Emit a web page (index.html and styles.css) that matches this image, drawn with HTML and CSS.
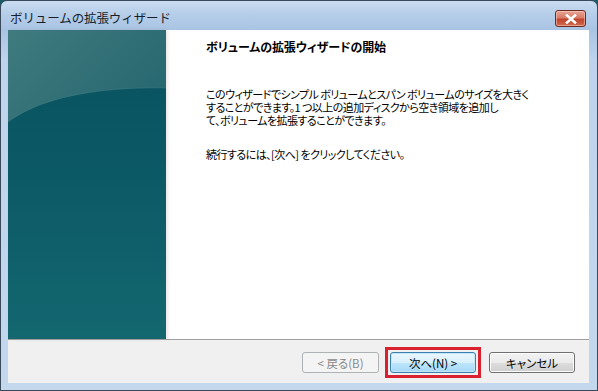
FILE: index.html
```html
<!DOCTYPE html>
<html lang="ja">
<head>
<meta charset="utf-8">
<title>ボリュームの拡張ウィザード</title>
<link rel="stylesheet" href="styles.css">
</head>
<body>
<div class="window">
  <div class="titlebar">
    <span class="title">ボリュームの拡張ウィザード</span>
    <button class="close" aria-label="閉じる">
      <svg width="12" height="10" viewBox="0 0 12 10"><path d="M2 1.5 L10 8.5 M10 1.5 L2 8.5" stroke="#fff" stroke-width="2.6" stroke-linecap="square"/></svg>
    </button>
  </div>
  <div class="client">
    <div class="main">
      <div class="panel">
        <svg width="158" height="309" viewBox="0 0 158 309">
          <defs>
            <linearGradient id="low" x1="0" y1="0" x2="0" y2="1">
              <stop offset="0" stop-color="#09515f"/>
              <stop offset="0.5" stop-color="#0c5a66"/>
              <stop offset="1" stop-color="#13676f"/>
            </linearGradient>
            <linearGradient id="high" x1="0" y1="0" x2="1" y2="0.6">
              <stop offset="0" stop-color="#3f7b7f"/>
              <stop offset="1" stop-color="#286870"/>
            </linearGradient>
          </defs>
          <rect width="158" height="309" fill="url(#low)"/>
          <path d="M0 0 H158 V58 C110 57 40 62 0 92 Z" fill="url(#high)"/>
          <path d="M0 92 C40 62 110 57 158 58" fill="none" stroke="#4b8a8e" stroke-opacity="0.3" stroke-width="1"/>
        </svg>
      </div>
      <div class="content">
        <h1 class="heading">ボリュームの拡張ウィザードの開始</h1>
        <p class="text">このウィザードでシンプル ボリュームとスパン ボリュームのサイズを大きく<br>することができます。1 つ以上の追加ディスクから空き領域を追加し<br>て、ボリュームを拡張することができます。</p>
        <p class="text">続行するには、[次へ] をクリックしてください。</p>
      </div>
    </div>
    <div class="sep"></div>
    <div class="footer">
      <button class="btn disabled">&lt; 戻る(B)</button>
      <span class="highlight"><button class="btn default">次へ(N) &gt;</button></span>
      <button class="btn cancel">キャンセル</button>
    </div>
  </div>
</div>
</body>
</html>
```
FILE: styles.css
```css
html, body {
  margin: 0;
  padding: 0;
  background: #1b5b66;
}
body {
  width: 598px;
  height: 391px;
  overflow: hidden;
  font-family: "Noto Sans CJK JP", "Noto Sans", sans-serif;
}
.window {
  box-sizing: border-box;
  width: 598px;
  height: 391px;
  border: 1px solid #3a4a5a;
  border-radius: 7px 7px 0 0;
  background: linear-gradient(180deg, #c9dcf1 0px, #b5cde8 14px, #a9c4e3 29px, #bfd4ec 60px, #c3d7ed 100%);
  display: flex;
  flex-direction: column;
}
.titlebar {
  height: 29px;
  display: flex;
  align-items: flex-start;
  padding-left: 9px;
  padding-right: 11px;
}
.title {
  font-size: 12.5px;
  line-height: 16px;
  margin-top: 9px;
  color: #151f2c;
  letter-spacing: -0.1px;
  flex: 1;
}
.close {
  margin-top: 9px;
  width: 31px;
  height: 17px;
  padding: 0;
  border: 1px solid #6d2a22;
  border-radius: 3px;
  background: linear-gradient(180deg, #e8a493 0%, #d87c68 45%, #c2452e 55%, #cf6a4c 100%);
  box-shadow: inset 0 0 0 1px rgba(255,220,210,0.5);
  display: flex;
  align-items: center;
  justify-content: center;
}
.close svg { display: block; }
.client {
  margin: 0 8px 0 7px;
  height: 353px;
  display: flex;
  flex-direction: column;
}
.main {
  height: 309px;
  display: flex;
  background: #fff;
}
.panel {
  width: 158px;
  height: 309px;
  flex: none;
  box-shadow: 2px 0 3px rgba(120, 90, 90, 0.15);
  position: relative;
  z-index: 1;
}
.panel svg { display: block; }
.content {
  flex: 1;
  padding: 9px 0 0 40px;
  background: #fff;
}
.heading {
  margin: 0;
  font-size: 12px;
  line-height: 16px;
  font-weight: bold;
  color: #000;
  font-feature-settings: "palt";
  letter-spacing: -0.1px;
}
.text {
  margin: 33px 0 0 0;
  font-size: 11px;
  line-height: 13px;
  color: #000;
  white-space: nowrap;
  font-feature-settings: "palt";
  letter-spacing: -0.55px;
}
.text + .text {
  margin-top: 21px;
}
.sep {
  height: 1px;
  background: #a0a0a0;
}
.footer {
  height: 43px;
  background: #f0f0f0;
  display: flex;
  justify-content: flex-end;
  align-items: flex-start;
  padding: 7px 14px 0 0;
  box-sizing: border-box;
}
.btn {
  height: 21px;
  box-sizing: border-box;
  margin: 5px 0 0 0;
  padding: 0;
  font-family: "Noto Sans CJK JP", sans-serif;
  font-size: 11.5px;
  line-height: 18px;
  color: #000;
  border: 1px solid #707070;
  border-radius: 3px;
  background: linear-gradient(180deg, #f2f2f2 0%, #ebebeb 50%, #dddddd 50%, #cfcfcf 100%);
  box-shadow: inset 0 0 0 1px #fcfcfc;
  font-feature-settings: "palt";
  display: block;
}
.disabled {
  width: 77px;
  color: #8a8a8a;
  border-color: #adb2b5;
  background: #f4f4f4;
  box-shadow: none;
}
.highlight {
  display: block;
  margin-left: 6px;
  border: 3px solid #d9202e;
  padding: 2px;
}
.default {
  width: 86px;
  margin: 0;
  border-color: #3c7fb1;
  background: linear-gradient(180deg, #eaf6fd 0%, #d9f0fc 50%, #bee6fd 50%, #a7d9f5 100%);
  box-shadow: inset 0 0 0 1px #c5e6f8;
}
.cancel {
  width: 86px;
  margin-left: 8px;
}
```
